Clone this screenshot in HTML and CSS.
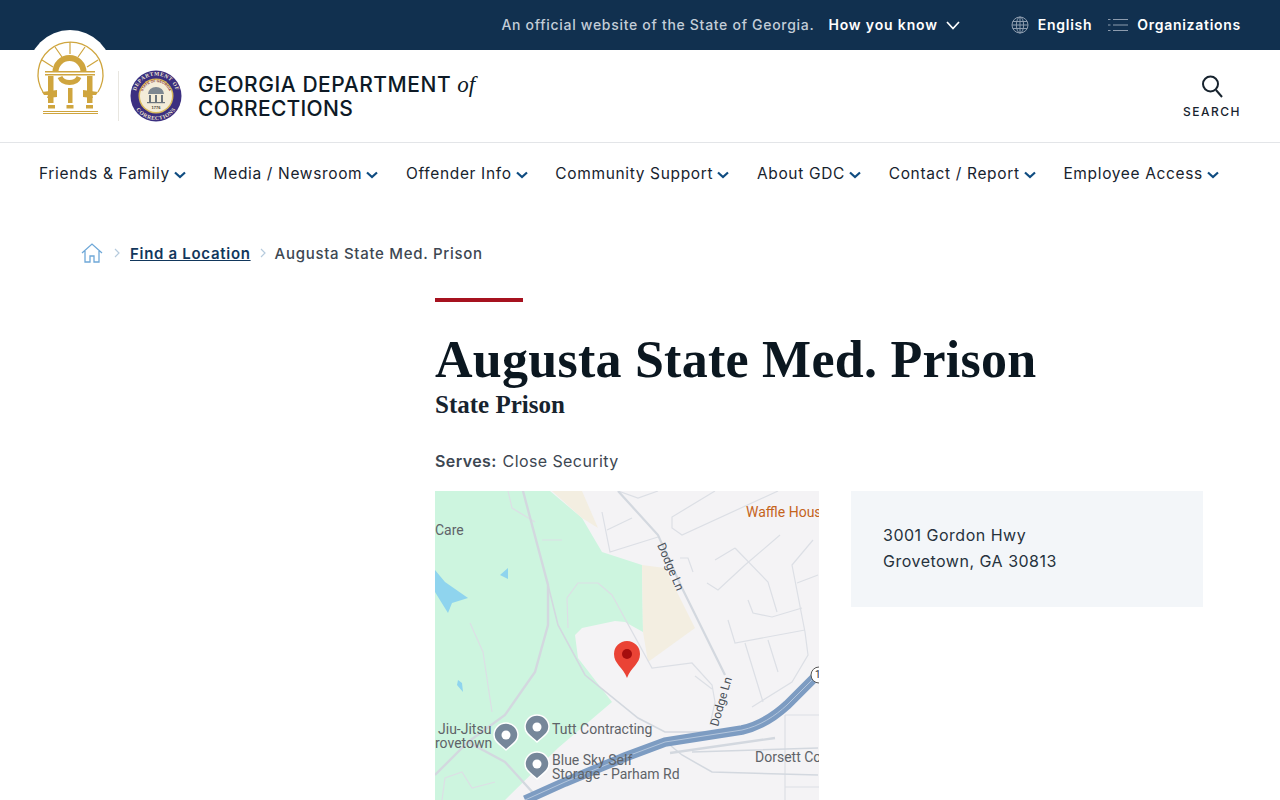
FILE: index.html
```html
<!DOCTYPE html>
<html lang="en">
<head>
    <meta charset="UTF-8">
    <meta name="viewport" content="width=device-width, initial-scale=1.0">
    <title>Augusta State Med. Prison</title>
    <link rel="stylesheet" href="styles.css">
</head>
<body>
    <div class="top-bar">
        <span class="official">An official website of the State of Georgia.</span>
        <a class="how-know" href="#">How you know
            <svg class="how-chevron" viewBox="0 0 14 9" width="14" height="9"><path d="M1 1l6 6.500L13 1" fill="none" stroke="#fff" stroke-width="1.700"/></svg>
        </a>
        <a class="top-link lang" href="#">
            <svg viewBox="0 0 18 18" width="18" height="18" fill="none" stroke="#8d9cae" stroke-width="1"><circle cx="9" cy="9" r="8"/><ellipse cx="9" cy="9" rx="3.600" ry="8"/><path d="M9 1v16M1.800 5.500h14.400M1 9h16M1.800 12.500h14.400"/></svg>
            English
        </a>
        <a class="top-link" href="#">
            <svg viewBox="0 0 20 14" width="20" height="14" fill="none" stroke="#8d9cae" stroke-width="1"><path d="M5 1.500h15M5 7h15M5 12.500h15M0 1.500h2.500M0 7h2.500M0 12.500h2.500"/></svg>
            Organizations
        </a>
    </div>

    <header class="site-header">
        <a class="seal-georgia" href="#">
            <svg viewBox="0 0 84 84" width="84" height="84">
                <g fill="none" stroke="#cfa53e">
                    <path d="M15 62A32.500 32.500 0 1 1 70 62" stroke-width="1.300"/>
                    <path d="M42 12v12M27 17l7 10M57 17l-7 10M14 30l11 7M70 30l-11 7" stroke-width="1.200"/>
                    <path d="M27.500 42A14 14 0 0 1 55.500 42" stroke-width="6"/>
                    <path d="M32 47A10 8 0 0 0 51 47" stroke-width="5"/>
                </g>
                <g fill="#cfa53e">
                    <rect x="17" y="41" width="50" height="1.500"/>
                    <rect x="17" y="44" width="50" height="1.500"/>
                    <rect x="20" y="46" width="5.500" height="27"/>
                    <rect x="40" y="58" width="4.500" height="15"/>
                    <rect x="59" y="46" width="5.500" height="27"/>
                    <path d="M14 62l15 -2v7l-10 1 1 -3 -4 0z"/>
                    <path d="M70 62l-15 -2v7l10 1 -1 -3 4 0z"/>
                    <rect x="20" y="75" width="7" height="3.500"/>
                    <rect x="38.500" y="75" width="7" height="3.500"/>
                    <rect x="58" y="75" width="7" height="3.500"/>
                    <rect x="15" y="81" width="55" height="1"/>
                    <rect x="15" y="83" width="55" height="1"/>
                </g>
            </svg>
        </a>
        <span class="brand-rule"></span>
        <svg class="seal-gdc" viewBox="0 0 52 52" width="52" height="52">
            <defs>
                <path id="ringTop" d="M5.500 26a20.500 20.500 0 0 1 41 0"/>
                <path id="ringBottom" d="M2 26a24 24 0 0 0 48 0"/>
                <path id="ringState" d="M12 26a14 14 0 0 1 28 0"/>
            </defs>
            <circle cx="26" cy="26" r="25.500" fill="#3b2f80"/>
            <circle cx="26" cy="26" r="17.500" fill="#d8b95c"/>
            <circle cx="26" cy="26" r="16" fill="#f3ecd8"/>
            <text class="seal-text"><textPath href="#ringTop" startOffset="50%" text-anchor="middle">DEPARTMENT OF</textPath></text>
            <text class="seal-text"><textPath href="#ringBottom" startOffset="50%" text-anchor="middle">CORRECTIONS</textPath></text>
            <text class="seal-inner"><textPath href="#ringState" startOffset="50%" text-anchor="middle">STATE OF GEORGIA</textPath></text>
            <path d="M18 24a8 7 0 0 1 16 0z" fill="#7d8790"/>
            <path d="M19 25h2v7h-2zM25 25h2v7h-2zM31 25h2v7h-2z" fill="#6b747c"/>
            <rect x="17" y="32" width="18" height="1.200" fill="#6b747c"/>
            <text class="seal-year" x="26" y="39" text-anchor="middle">1776</text>
        </svg>
        <a class="brand-name" href="#">GEORGIA DEPARTMENT <em>of</em><br><span class="brand-line">CORRECTIONS</span></a>
        <a class="search-link" href="#">
            <svg viewBox="0 0 24 24" width="24" height="24" fill="none" stroke="#17232e" stroke-width="2"><circle cx="10.500" cy="10" r="7.500"/><path d="M16 16l6 7"/></svg>
            <span>SEARCH</span>
        </a>
    </header>

    <nav class="main-nav">
        <a href="#">Friends &amp; Family <svg class="nav-chevron" viewBox="0 0 12 8"><path d="M1 1.500l5 4.500 5-4.500"/></svg></a>
        <a href="#">Media / Newsroom <svg class="nav-chevron" viewBox="0 0 12 8"><path d="M1 1.500l5 4.500 5-4.500"/></svg></a>
        <a href="#">Offender Info <svg class="nav-chevron" viewBox="0 0 12 8"><path d="M1 1.500l5 4.500 5-4.500"/></svg></a>
        <a href="#">Community Support <svg class="nav-chevron" viewBox="0 0 12 8"><path d="M1 1.500l5 4.500 5-4.500"/></svg></a>
        <a href="#">About GDC <svg class="nav-chevron" viewBox="0 0 12 8"><path d="M1 1.500l5 4.500 5-4.500"/></svg></a>
        <a href="#">Contact / Report <svg class="nav-chevron" viewBox="0 0 12 8"><path d="M1 1.500l5 4.500 5-4.500"/></svg></a>
        <a href="#">Employee Access <svg class="nav-chevron" viewBox="0 0 12 8"><path d="M1 1.500l5 4.500 5-4.500"/></svg></a>
    </nav>

    <div class="breadcrumb">
        <svg viewBox="0 0 22 20" width="22" height="20" fill="none" stroke="#6fa8d8" stroke-width="1.300"><path d="M1 10L11 1l10 9M4 8v11h5v-6h4v6h5V8"/></svg>
        <svg class="crumb-sep" viewBox="0 0 6 10" width="6" height="10"><path d="M1 1l4 4-4 4"/></svg>
        <a href="#">Find a Location</a>
        <svg class="crumb-sep" viewBox="0 0 6 10" width="6" height="10"><path d="M1 1l4 4-4 4"/></svg>
        <span>Augusta State Med. Prison</span>
    </div>

    <main class="location">
        <div class="accent"></div>
        <h1>Augusta State Med. Prison</h1>
        <h2>State Prison</h2>
        <p class="serves"><strong>Serves:</strong> Close Security</p>
        <div class="location-grid">
            <svg class="map" viewBox="0 0 384 309" width="384" height="309">
                <rect width="384" height="309" fill="#f4f3f5"/>
                <path d="M0 0H115L147 27 167 61 207 74 208 141 190 131 180 130 147 137 140 144 143 167 177 211 123 257 70 309H0z" fill="#cdf5df"/>
                <path d="M117 0H147L163 37 147 27zM207 74L230 77 260 137 213 171 208 141z" fill="#f3eee1"/>
                <path d="M0 79L10 91 33 107 17 112 13 122 8 114 0 101zM73 77L65 84 73 88zM23 189L22 194 28 201 27 192z" fill="#8fd4ee"/>

                <!-- side streets -->
                <g fill="none" stroke="#dcdfe5" stroke-width="1.200">
                    <path d="M167 21L175 61 223 46M172 39L197 27"/>
                    <path d="M183 0L203 7 223 0"/>
                    <path d="M280 0L237 26V37L247 44 343 0"/>
                    <path d="M345 44L310 74 283 99 272 92M300 57L333 91 342 121M280 69L300 57"/>
                    <path d="M313 109L318 122 337 126 367 117"/>
                    <path d="M293 129L300 152 370 139"/>
                    <path d="M378 49L357 74 370 141 373 164 357 191 317 216"/>
                    <path d="M310 152L328 211M333 149L343 181M362 92L383 84M245 67H253L258 81"/>
                    <path d="M133 137L132 107 143 92H163L177 104 217 177 257 172 277 194 280 211 275 234"/>
                    <path d="M260 185L277 198"/>
                    <path d="M35 132L48 161 57 221M73 0L77 17 100 31M107 49H127"/>
                    <path d="M350 224V309M350 224H384M350 296H384"/>
                    <path d="M7 309L10 287 27 281 37 297 60 291"/>
                </g>
                <!-- main roads and rail -->
                <g fill="none" stroke="#d3d8df">
                    <path d="M183 0L223 44 247 97 290 184" stroke-width="2.200"/>
                    <path d="M88 0L113 94V134L100 181 70 224 33 251 0 284" stroke-width="2.400"/>
                    <path d="M113 94L123 134 150 184 203 227 230 241H273" stroke-width="1.600"/>
                    <path d="M33 251L70 271 100 304" stroke-width="2.400"/>
                    <path d="M235 262L340 247" stroke-width="2.400"/>
                    <path d="M257 261L383 257M230 250L247 264 277 281 383 284" stroke-width="1.500"/>
                </g>
                <path d="M90 309L130 291 190 266 230 251 307 239C325 235 340 225 352 214L384 182" fill="none" stroke="#7d9cc2" stroke-width="9.500"/>
                <path d="M90 309L130 291 190 266 230 251 307 239C325 235 340 225 352 214L384 182" fill="none" stroke="#b4c6dc" stroke-width="1"/>

                <text class="map-label" x="0" y="44">Care</text>
                <text class="map-label orange" x="311" y="26">Waffle House</text>
                <text class="map-label small" transform="translate(222 54) rotate(67)">Dodge Ln</text>
                <text class="map-label small" transform="translate(283 236) rotate(-74)">Dodge Ln</text>
                <text class="map-label" x="3" y="243">Jiu-Jitsu</text>
                <text class="map-label" x="0" y="257">rovetown</text>
                <text class="map-label" x="117" y="243">Tutt Contracting</text>
                <text class="map-label" x="117" y="274">Blue Sky Self</text>
                <text class="map-label" x="117" y="288">Storage - Parham Rd</text>
                <text class="map-label" x="320" y="271">Dorsett Co</text>

                <g fill="#76879a" stroke="#fff" stroke-width="1.500">
                    <path d="M71 259C66 254 59 251 59 244A12 12 0 0 1 83 244C83 251 76 254 71 259z"/>
                    <path d="M102 251C97 246 90 243 90 236A12 12 0 0 1 114 236C114 243 107 246 102 251z"/>
                    <path d="M102 288C97 283 90 280 90 273A12 12 0 0 1 114 273C114 280 107 283 102 288z"/>
                </g>
                <circle cx="71" cy="244" r="4.500" fill="#fff"/>
                <circle cx="102" cy="236" r="4.500" fill="#fff"/>
                <circle cx="102" cy="273" r="4.500" fill="#fff"/>

                <circle cx="384" cy="184" r="8" fill="#fff" stroke="#555" stroke-width="1"/>
                <text class="map-shield" x="380" y="187">1</text>

                <path d="M192 187C188 176 179 173 179 163A13 13 0 0 1 205 163C205 173 196 176 192 187z" fill="#ea4335"/>
                <circle cx="192" cy="163" r="5" fill="#a50e0e"/>
            </svg>
            <div class="address">3001 Gordon Hwy<br>Grovetown, GA 30813</div>
        </div>
    </main>
</body>
</html>
```

FILE: styles.css
```css
body {
    font-family: 'Inter', 'Liberation Sans', sans-serif;
    margin: 0;
    color: #17232e;
    background: #fff;
    overflow: hidden;
}

a {
    color: inherit;
    text-decoration: none;
}

.top-bar {
    height: 48px;
    padding-bottom: 2px;
    background: #11304f;
    color: #fff;
    display: flex;
    align-items: center;
    justify-content: flex-end;
    padding-right: 39px;
    font-size: 14px;
    font-weight: 600;
}

.top-bar svg {
    margin-top: 2px;
}

.official {
    color: #c3cdd8;
    font-weight: 500;
    letter-spacing: 0.7px;
    margin-right: 14px;
}

.how-know {
    display: flex;
    align-items: center;
    gap: 8px;
    letter-spacing: 0.85px;
    margin-right: 51px;
}

.top-link {
    display: flex;
    align-items: center;
    gap: 9px;
    letter-spacing: 0.72px;
}

.lang {
    margin-right: 16px;
}

.site-header {
    height: 92px;
    border-bottom: 1px solid #e3e5e8;
    display: flex;
    align-items: center;
    padding: 0 39px 0 28px;
}

.seal-georgia {
    display: block;
    width: 84px;
    height: 84px;
    align-self: flex-start;
    margin-top: -20px;
    background: #fff;
    border-radius: 50%;
    position: relative;
}

.brand-rule {
    width: 1px;
    height: 50px;
    background: #e8e6e0;
    margin: 0 11px 0 6px;
}

.seal-text {
    font-family: 'Liberation Serif', serif;
    font-size: 5.500px;
    font-weight: 700;
    fill: #efe6cf;
    letter-spacing: 0.5px;
}

.seal-inner {
    font-family: 'Liberation Sans', sans-serif;
    font-size: 3.500px;
    font-weight: 700;
    fill: #8a3a3a;
}

.seal-year {
    font-family: 'Liberation Sans', sans-serif;
    font-size: 4px;
    font-weight: 700;
    fill: #3d3a30;
}

.brand-name {
    margin: 2px 0 0 16px;
    font-size: 21px;
    line-height: 24px;
    font-weight: 500;
    color: #0d1a26;
    letter-spacing: 0.55px;
}

.brand-name em {
    font-family: 'Liberation Serif', serif;
    font-size: 23px;
    letter-spacing: 0;
}

.brand-line {
    letter-spacing: 0.3px;
}

.search-link {
    margin-left: auto;
    display: flex;
    flex-direction: column;
    align-items: center;
    gap: 6px;
    font-size: 12px;
    font-weight: 500;
    letter-spacing: 1.500px;
}

.main-nav {
    display: flex;
    justify-content: space-between;
    padding: 20px 61px 0 39px;
    font-size: 15.500px;
    line-height: 22px;
    letter-spacing: 0.65px;
    color: #17232e;
}

.main-nav a {
    display: flex;
    align-items: center;
    gap: 4px;
}

.nav-chevron {
    width: 12px;
    height: 8px;
    margin-top: 2px;
    fill: none;
    stroke: #0f4c81;
    stroke-width: 2.200;
}

.breadcrumb {
    display: flex;
    align-items: center;
    margin: 55px 0 0 81px;
    height: 26px;
    font-size: 15px;
    font-weight: 500;
    color: #3d4752;
    letter-spacing: 0.7px;
}

.breadcrumb a {
    color: #12375c;
    font-weight: 600;
    text-decoration: underline;
}

.crumb-sep {
    margin: 0 10.500px;
    fill: none;
    stroke: #b6cbdd;
    stroke-width: 1.200;
}

.crumb-sep + a + .crumb-sep {
    margin: 0 9px;
}

.location {
    padding-left: 435px;
    width: 768px;
    margin-top: 32px;
}

.accent {
    width: 88px;
    height: 4px;
    background: #a6121f;
}

h1 {
    font-family: 'Liberation Serif', serif;
    font-size: 52px;
    line-height: 60px;
    font-weight: 700;
    letter-spacing: 0.25px;
    color: #0b1720;
    margin: 28px 0 0;
}

h2 {
    font-family: 'Liberation Serif', serif;
    font-size: 25px;
    line-height: 30px;
    font-weight: 700;
    color: #17232e;
    margin: 0;
}

.serves {
    margin: 28px 0 0;
    font-size: 16px;
    line-height: 26px;
    color: #3d4752;
    letter-spacing: 0.4px;
}

.serves strong {
    font-weight: 600;
    margin-right: 1px;
}

.location-grid {
    display: grid;
    grid-template-columns: 384px 352px;
    gap: 32px;
    margin-top: 17px;
    align-items: start;
}

.map {
    display: block;
}

.map-label {
    font-family: 'Roboto', sans-serif;
    font-size: 14px;
    fill: #5f6368;
}

.map-label.orange {
    fill: #c5641c;
}

.map-label.small {
    font-size: 12px;
    fill: #4a5058;
}

.map-shield {
    font-family: 'Roboto', sans-serif;
    font-size: 10px;
    fill: #333;
}

.address {
    background: #f3f6f9;
    padding: 31px 32px 33px;
    height: 52px;
    font-size: 16px;
    line-height: 26px;
    color: #26323d;
    letter-spacing: 0.5px;
}
```
